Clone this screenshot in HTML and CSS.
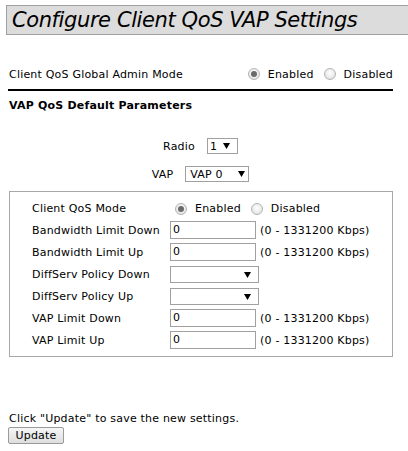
FILE: index.html
```html
<!DOCTYPE html>
<html>
<head>
<meta charset="utf-8">
<link rel="stylesheet" href="styles.css">
</head>
<body>
<h1 class="title">Configure Client QoS VAP Settings</h1>
<div class="content">
  <div class="global-row">
    <span class="label">Client QoS Global Admin Mode</span>
    <span class="options">
      <span class="opt"><span class="radio checked"></span>Enabled</span>
      <span class="opt"><span class="radio"></span>Disabled</span>
    </span>
  </div>
  <div class="rule"></div>
  <h2 class="section">VAP QoS Default Parameters</h2>
  <div class="picker picker-radio">
    <span class="picker-label">Radio</span>
    <span class="select select-radio"><span>1</span><svg class="arrow" width="7" height="6" viewBox="0 0 7 6"><polygon points="0,0 7,0 3.5,6" fill="#000"/></svg></span>
  </div>
  <div class="picker picker-vap">
    <span class="picker-label">VAP</span>
    <span class="select select-vap"><span>VAP 0</span><svg class="arrow" width="7" height="6" viewBox="0 0 7 6"><polygon points="0,0 7,0 3.5,6" fill="#000"/></svg></span>
  </div>
  <div class="box">
    <table class="params">
      <tr>
        <td class="plabel">Client QoS Mode</td>
        <td colspan="2"><span class="options in-box">
          <span class="opt"><span class="radio checked"></span>Enabled</span>
          <span class="opt"><span class="radio"></span>Disabled</span>
        </span></td>
      </tr>
      <tr>
        <td class="plabel">Bandwidth Limit Down</td>
        <td class="pfield"><span class="textbox">0</span></td>
        <td class="range">(0 - 1331200 Kbps)</td>
      </tr>
      <tr>
        <td class="plabel">Bandwidth Limit Up</td>
        <td class="pfield"><span class="textbox">0</span></td>
        <td class="range">(0 - 1331200 Kbps)</td>
      </tr>
      <tr>
        <td class="plabel">DiffServ Policy Down</td>
        <td class="pfield" colspan="2"><span class="select select-policy"><span></span><svg class="arrow" width="7" height="6" viewBox="0 0 7 6"><polygon points="0,0 7,0 3.5,6" fill="#000"/></svg></span></td>
      </tr>
      <tr>
        <td class="plabel">DiffServ Policy Up</td>
        <td class="pfield" colspan="2"><span class="select select-policy"><span></span><svg class="arrow" width="7" height="6" viewBox="0 0 7 6"><polygon points="0,0 7,0 3.5,6" fill="#000"/></svg></span></td>
      </tr>
      <tr>
        <td class="plabel">VAP Limit Down</td>
        <td class="pfield"><span class="textbox">0</span></td>
        <td class="range">(0 - 1331200 Kbps)</td>
      </tr>
      <tr>
        <td class="plabel">VAP Limit Up</td>
        <td class="pfield"><span class="textbox">0</span></td>
        <td class="range">(0 - 1331200 Kbps)</td>
      </tr>
    </table>
  </div>
  <p class="hint">Click "Update" to save the new settings.</p>
  <button class="btn" type="button">Update</button>
</div>
</body>
</html>
```

FILE: styles.css
```css
html, body {
  margin: 0;
  padding: 0;
  background: #fff;
}
body {
  font-family: "DejaVu Sans", Verdana, sans-serif;
  font-size: 11px;
  letter-spacing: 0.2px;
  color: #000;
  overflow: hidden;
}
.title {
  margin: 5px 0 0 6px;
  height: 28px;
  line-height: 28px;
  padding-left: 5px;
  background: #dcdcdc;
  border: 1px solid #a0a0a0;
  border-right: 0;
  font-size: 21px;
  letter-spacing: -0.4px;
  font-style: italic;
  font-weight: normal;
  white-space: nowrap;
}
.content {
  margin: 0 15px 0 8px;
}
.global-row {
  margin-top: 30px;
  height: 18px;
  display: flex;
  align-items: center;
  justify-content: space-between;
  padding-left: 1px;
}
.options {
  display: flex;
  align-items: center;
}
.opt {
  display: flex;
  align-items: center;
}
.opt + .opt {
  margin-left: 10px;
}
.radio {
  display: inline-block;
  box-sizing: border-box;
  width: 12px;
  height: 12px;
  border-radius: 50%;
  border: 1px solid #b4b4b4;
  background: radial-gradient(circle at 50% 40%, #ffffff 0%, #e6e6e6 70%, #d4d4d4 100%);
  margin-right: 8px;
  position: relative;
}
.radio.checked::after {
  content: "";
  position: absolute;
  left: 2px;
  top: 2px;
  width: 6px;
  height: 6px;
  border-radius: 50%;
  background: #6a6a6a;
}
.rule {
  margin-top: 6px;
  height: 2px;
  background: #000;
}
.section {
  margin: 8px 0 0 1px;
  font-size: 11px;
  line-height: 14px;
  font-weight: bold;
}
.picker {
  display: flex;
  justify-content: center;
  align-items: center;
  gap: 12px;
  height: 16px;
}
.picker-radio {
  margin-top: 25px;
}
.picker-vap {
  margin-top: 12px;
}
.select {
  box-sizing: border-box;
  display: inline-flex;
  align-items: center;
  justify-content: space-between;
  height: 16px;
  border: 1px solid #a0a0a0;
  background: #fff;
  padding: 0 7px 0 2px;
}
.select-radio {
  width: 31px;
}
.select-vap {
  width: 64px;
  padding-left: 4px;
  padding-right: 3px;
}
.select-policy {
  width: 89px;
  height: 17px;
}
.arrow {
  display: block;
}
.box {
  margin: 9px 0 0 1px;
  border: 1px solid #a8a8a8;
  padding: 5px 0 5px 22px;
}
.params {
  border-collapse: collapse;
}
.params td {
  padding: 0;
  height: 22px;
  vertical-align: middle;
  white-space: nowrap;
}
.plabel {
  width: 138px;
}
.pfield {
  width: 86px;
}
.in-box {
  padding-left: 5px;
  padding-top: 1px;
}
.textbox {
  box-sizing: border-box;
  display: block;
  width: 86px;
  height: 18px;
  line-height: 16px;
  border: 1px solid #a0a0a0;
  padding-left: 2px;
}
.range {
  padding-left: 4px !important;
}
.hint {
  margin: 55px 0 0 1px;
  line-height: 14px;
}
.btn {
  margin-top: 1px;
  height: 17px;
  width: 56px;
  padding: 0;
  font-family: inherit;
  font-size: 11px;
  letter-spacing: 0.2px;
  color: #000;
  border: 1px solid #9a9a9a;
  border-radius: 2px;
  background: linear-gradient(#f6f6f6, #dedede);
  display: block;
}
```
